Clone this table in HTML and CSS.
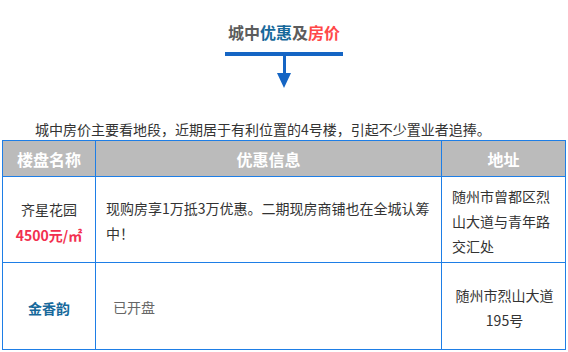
FILE: index.html
```html
<!DOCTYPE html>
<html lang="zh-CN">
<head>
<meta charset="utf-8">
<title>城中优惠及房价</title>
<link rel="stylesheet" href="styles.css">
</head>
<body>
<div class="page">
  <h2 class="title"><span class="gray">城中</span><span class="blue">优惠</span><span class="gray">及</span><span class="red">房价</span></h2>
  <div class="bar"></div>
  <div class="arrow"><div class="stem"></div><div class="head"></div></div>
  <p class="intro">城中房价主要看地段，近期居于有利位置的4号楼，引起不少置业者追捧。</p>
  <div class="grid">
    <div class="cell th">楼盘名称</div>
    <div class="cell th">优惠信息</div>
    <div class="cell th">地址</div>

    <div class="cell name"><span>齐星花园</span><span class="price">4500元/㎡</span></div>
    <div class="cell info">现购房享1万抵3万优惠。二期现房商铺也在全城认筹中！</div>
    <div class="cell addr">随州市曾都区烈山大道与青年路交汇处</div>

    <div class="cell name"><span class="teal">金香韵</span></div>
    <div class="cell info muted">已开盘</div>
    <div class="cell addr center">随州市烈山大道<br>195号</div>
  </div>
</div>
</body>
</html>
```
FILE: styles.css
```css
* { box-sizing: border-box; margin: 0; padding: 0; }
body {
  margin: 0;
  background: #fff;
  font-family: "Noto Sans CJK SC", "Microsoft YaHei", sans-serif;
  color: #333;
}
.page { width: 568px; padding-top: 20px; }
.title {
  font-size: 16px;
  line-height: 24px;
  font-weight: bold;
  text-align: center;
}
.gray { color: #5c5c5c; }
.blue { color: #17699b; }
.red { color: #ff4848; }
.bar {
  width: 118px;
  height: 4px;
  margin: 8px auto 0 225px;
  background: #1565c4;
}
.arrow {
  display: flex;
  flex-direction: column;
  align-items: center;
  width: 14px;
  margin-left: 277px;
}
.stem { width: 3px; height: 17px; background: #1565c4; }
.head {
  width: 0; height: 0;
  border-left: 7px solid transparent;
  border-right: 7px solid transparent;
  border-top: 15px solid #1565c4;
}
.intro {
  margin-top: 31px;
  padding-left: 35px;
  font-size: 14px;
  line-height: 20px;
  color: #333;
}
.grid {
  margin: 1px 0 0 2px;
  width: 564px;
  display: grid;
  grid-template-columns: 92px 345px 123px;
  grid-template-rows: 35px 85px 86px;
  gap: 1px;
  padding: 1px;
  background: #1e7ee6;
}
.cell {
  background: #fff;
  display: flex;
  align-items: center;
  font-size: 14px;
  line-height: 25px;
}
.th {
  background: #bbbbbb;
  color: #fff;
  font-size: 16px;
  font-weight: bold;
  justify-content: center;
  padding-top: 2px;
}
.name {
  flex-direction: column;
  justify-content: center;
  align-items: center;
  line-height: 26px;
  padding-top: 4px;
}
.price { color: #f2304f; font-weight: bold; }
.teal { color: #17699b; font-weight: bold; }
.info { padding: 2px 8px 0 10px; }
.muted { color: #666; padding-left: 17px; }
.addr { padding: 4px 8px 0 10px; }
.center { text-align: center; justify-content: center; padding: 4px 4px 0 6px; }
```
